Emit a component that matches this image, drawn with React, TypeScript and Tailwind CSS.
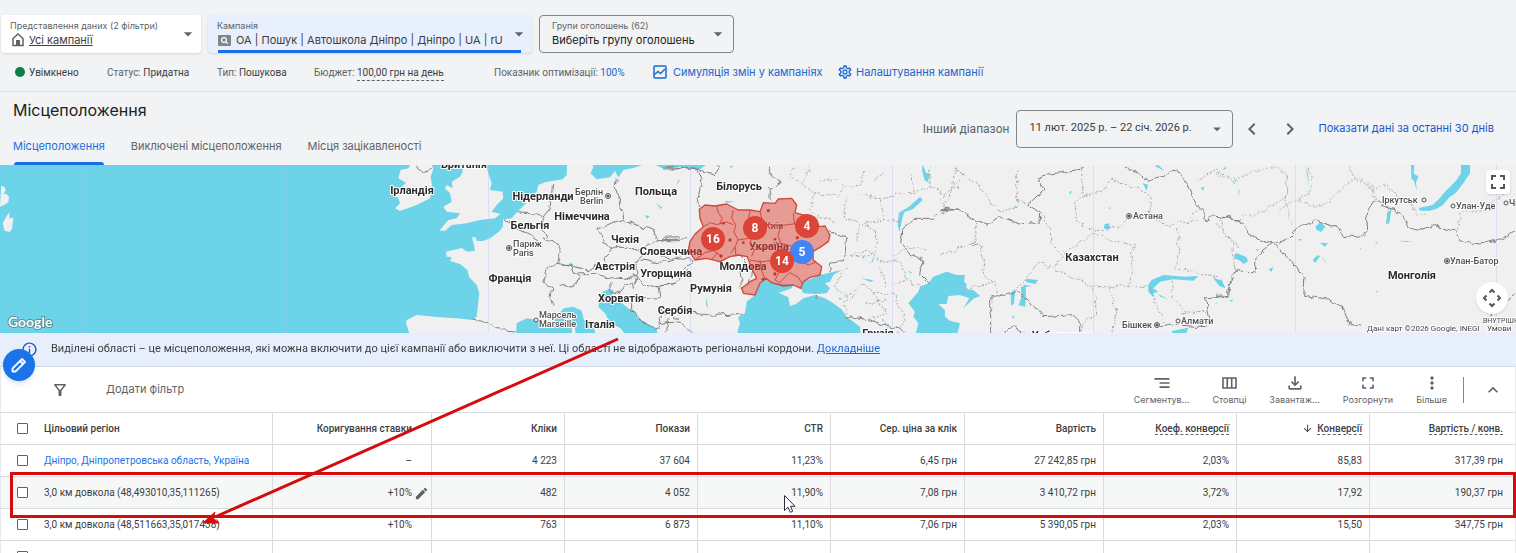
import { useState } from 'react';
import {
  MdArrowDownward,
  MdArrowDropDown,
  MdChevronLeft,
  MdChevronRight,
  MdEdit,
  MdFullscreen,
  MdInfoOutline,
  MdKeyboardArrowUp,
  MdMoreVert,
  MdOutlineFileDownload,
  MdOutlineFilterAlt,
  MdOutlineSettings,
  MdSegment,
} from 'react-icons/md';

const cls = {
  display: "font-['Inter',sans-serif]",
  muted: 'text-[#5f6368]',
  dashed: 'border-b border-dashed border-[#5f6368]',
  th: 'px-[7px] text-right font-medium text-[#3c4043]',
  cell: 'border-r border-[#dadce0] last:border-r-0',
};

const columns = [
  { label: 'Коригування ставки', width: 'w-[159px]' },
  { label: 'Кліки', width: 'w-[133px]' },
  { label: 'Покази', width: 'w-[133px]' },
  { label: 'CTR', width: 'w-[133px]' },
  { label: 'Сер. ціна за клік', width: 'w-[134px]' },
  { label: 'Вартість', width: 'w-[139px]' },
  { label: 'Коеф. конверсії', width: 'w-[133px]', dashed: true },
  { label: 'Конверсії', width: 'w-[133px]', dashed: true, sorted: true },
  { label: 'Вартість / конв.', width: 'w-[146px]', dashed: true },
];

const rows = [
  {
    region: 'Дніпро, Дніпропетровська область, Україна',
    link: true,
    values: ['–', '4 223', '37 604', '11,23%', '6,45 грн', '27 242,85 грн', '2,03%', '85,83', '317,39 грн'],
  },
  {
    region: '3,0 км довкола (48,493010,35,111265)',
    active: true,
    values: ['+10%', '482', '4 052', '11,90%', '7,08 грн', '3 410,72 грн', '3,72%', '17,92', '190,37 грн'],
  },
  {
    region: '3,0 км довкола (48,511663,35,017438)',
    values: ['+10%', '763', '6 873', '11,10%', '7,06 грн', '5 390,05 грн', '2,03%', '15,50', '347,75 грн'],
  },
  { region: '', values: ['', '', '', '', '', '', '', '', ''] },
];

const countries = [
  { text: 'Британія', x: 464, y: 168 },
  { text: 'Ірландія', x: 412, y: 194 },
  { text: 'Нідерланди', x: 543, y: 200 },
  { text: 'Німеччина', x: 582, y: 220 },
  { text: 'Бельгія', x: 530, y: 229 },
  { text: 'Польща', x: 656, y: 195 },
  { text: 'Чехія', x: 625, y: 243 },
  { text: 'Словаччина', x: 671, y: 255 },
  { text: 'Австрія', x: 615, y: 270 },
  { text: 'Угорщина', x: 666, y: 277 },
  { text: 'Франція', x: 510, y: 282 },
  { text: 'Хорватія', x: 621, y: 302 },
  { text: 'Сербія', x: 675, y: 314 },
  { text: 'Італія', x: 600, y: 328 },
  { text: 'Румунія', x: 711, y: 292 },
  { text: 'Молдова', x: 743, y: 270 },
  { text: 'Україна', x: 769, y: 250 },
  { text: 'Білорусь', x: 739, y: 190 },
  { text: 'Грузія', x: 878, y: 337 },
  { text: 'Казахстан', x: 1092, y: 261 },
  { text: 'Узбекистан', x: 1062, y: 339 },
  { text: 'Монголія', x: 1412, y: 279 },
];

const cities = [
  { text: 'Берлін', x: 575, y: 195, dot: [608, 196] },
  { text: 'Berlin', x: 580, y: 204 },
  { text: 'Париж', x: 513, y: 247, dot: [509, 248] },
  { text: 'Paris', x: 513, y: 256 },
  { text: 'Марсель', x: 539, y: 318, ring: [536, 320] },
  { text: 'Marseille', x: 539, y: 327 },
  { text: 'Київ', x: 765, y: 229 },
  { text: 'Астана', x: 1133, y: 219, dot: [1129, 216] },
  { text: 'Бішкек', x: 1122, y: 328, dot: [1157, 325] },
  { text: 'Алмати', x: 1181, y: 324, ring: [1178, 321] },
  { text: 'Іркутськ', x: 1382, y: 203, ring: [1424, 200] },
  { text: 'Улан-Уде', x: 1456, y: 209, ring: [1453, 206] },
  { text: 'Чита', x: 1509, y: 206, ring: [1506, 203] },
  { text: 'Улан-Батор', x: 1450, y: 264, dot: [1447, 261] },
];

const clusters = [
  { count: 8, x: 755, y: 228, color: '#db4437' },
  { count: 4, x: 807, y: 226, color: '#db4437' },
  { count: 16, x: 713, y: 239, color: '#db4437' },
  { count: 5, x: 802, y: 252, color: '#4285f4' },
  { count: 14, x: 782, y: 261, color: '#db4437' },
];

const HomeIcon = () => (
  <svg className="h-[14px] w-[12px] shrink-0" viewBox="0 0 12 14" fill="none" stroke="#5f6368" strokeWidth="1.5">
    <path d="M1 12.5V5.5L6 1l5 4.5v7z" />
    <path d="M4 12V7h4v5z" fill="#5f6368" stroke="none" />
  </svg>
);

const SearchBadge = () => (
  <svg className="h-[11px] w-[13px] shrink-0" viewBox="0 0 13 11" fill="none" stroke="#fff" strokeWidth="1.2">
    <rect width="13" height="11" rx="1" fill="#80868b" stroke="none" />
    <circle cx="6" cy="5" r="2.4" />
    <path d="M7.8 6.8l2 2" />
  </svg>
);

const ChartIcon = () => (
  <svg className="size-[14px] shrink-0" viewBox="0 0 14 14" fill="none" stroke="#1a67d2" strokeWidth="1.5">
    <rect x="1" y="1" width="12" height="12" rx="1" />
    <path d="M1.5 9.5l3.5-3 2.5 2 4.5-4.5" />
  </svg>
);

const ColumnsIcon = () => (
  <svg className="h-5 w-[15px]" viewBox="0 0 15 20" fill="none" stroke="currentColor" strokeWidth="1.6">
    <path d="M1 5h13v10H1zM5.3 5v10M9.7 5v10" />
  </svg>
);

const LocationMap = () => (
  <svg className="block h-full w-full" viewBox="0 165 1516 168" preserveAspectRatio="xMidYMid slice">
    <defs>
      <filter id="rough" x="0" y="165" width="1516" height="168" filterUnits="userSpaceOnUse">
        <feTurbulence type="fractalNoise" baseFrequency="0.12" numOctaves="2" seed="4" />
        <feDisplacementMap in="SourceGraphic" scale="7" xChannelSelector="R" yChannelSelector="G" />
      </filter>
    </defs>
    <rect y="165" width="1516" height="168" fill="#f0f0f0" />

    {/* Western Europe */}
    <g transform="translate(380 160) scale(.33333)">
      <path fill="#6cd3e8" d="M-1140 0H562L560 45L548 58L520 62L498 66L475 75L470 95L455 115L430 138L412 155L395 175L370 178L368 200L360 212L330 235L310 243L290 243L288 232L276 232L282 255L285 272L262 275L245 264L198 275L200 290L215 292L210 303L240 312L262 330L268 352L290 375L298 400L290 470L278 480L230 475L180 472L110 465L80 480L78 490L92 530H-1140z" />
      <path fill="#6cd3e8" d="M408 530L410 490L440 475L470 480L520 492L532 465L552 445L580 440L605 452L612 480L640 500L650 530z" />
      <path fill="#6cd3e8" d="M655 440L660 412L668 395L690 387L702 392L695 408L720 425L745 445L765 455L775 475L800 490L830 505L834 530H740L722 505L690 488L675 460z" />
      <path fill="#6cd3e8" d="M632 0L640 22L632 40L650 58L690 52L705 32L715 52L730 30L760 24L792 13H822L850 26L880 22L900 22L960 28L980 13L980 0z" />
      <path fill="#6cd3e8" d="M566 308l14 4-4 7zM706 232l14 6-8 3zM826 128l22 16-6 2zM795 165l14 4-8 8z" />
      <path fill="#f0f0f0" d="M245 0L248 35L240 50L215 65L218 85L200 75L195 85L210 100L215 125L190 140L200 155L240 160L230 175L205 180L178 212L195 212L215 195L260 190L300 180L345 175L362 162L335 155L350 135L370 115L368 95L330 90L335 70L325 40L315 0z" />
      <path fill="#f0f0f0" d="M100 0L85 25L62 30L55 55L78 68L65 80L35 100L55 115L60 130L45 145L60 153L110 135L150 115L157 80L152 50L160 28L150 0z" />
      <path fill="#f0f0f0" d="M425 122l30-6-15 14zM575 498l8-6 4 30h-10zM-1137 90v-12l10 2l4 10l-6 12l8 0l8 8l-2 16l-12 8l-13 6zM-1132 190l12-22l8 -12v20l12-4l-4 36l-8 8l-14-4z" />
    </g>

    {/* Black Sea and Azov */}
    <g transform="translate(660 160) scale(.33333)" fill="#6cd3e8">
      <path d="M318 356L335 368L400 375L395 385L375 392L356 398L385 412L390 438L408 432L430 415L465 405L495 415L520 430L545 448L560 470L600 500L602 530H228L240 490L234 472L255 460L260 425L285 405L298 375z" />
      <path d="M430 365L480 345L545 330L520 345L510 365L495 370L510 385L500 400L465 402L430 400L422 385z" />
      <path d="M788 13l10 25 15 5-10 18 5 8-14-8-8-30zM780 110l8 10-30 28-25 8-8 25-6 35-6-20 4-38 30-18zM645 280l-6 25-25 12 20-10zM606 290l10-5-6 12zM605 355l35 6-8 5zM745 330l12 10-8-2zM535 412l12 4-8 4zM140 412l4 35-6-15zM0 15h20l-12 10zM60 60l-12 18 8-18zM196 122l30 4-28 2zM210 18l8 0-4 8z" />
    </g>

    {/* Caspian Sea, Aral Sea and Balkhash */}
    <g transform="translate(940 160) scale(.33333)" fill="#6cd3e8">
      <path d="M-95 430L-65 395L-60 380L-35 370L-20 350L20 335L50 345L75 345L72 365L80 372L78 388L100 390L120 408L100 416L70 445L88 415L60 405L25 408L20 432L-5 432L15 450L15 470L30 482L60 490L50 530H-75L-65 490L-80 470L-75 455z" />
      <path d="M625 375L635 360L670 345L735 350L775 348L760 362L700 358L660 365L640 385L655 395L640 400L640 412L625 395zM655 402l30 16-24-8zM720 460l24-2-14 6zM818 352l20 8 18 24-18-6zM695 513l50-10-10 27h-35zM212 400l14-14-4 45-9 6zM243 380l14 0 1 30-2 30-20-4 8-26zM258 356l36 4-8 12-28-6zM250 374l26 4-26 4zM215 470l8-4-3 10zM388 96l8-4-6 14zM494 192l14-2 0 18-16-2zM505 142l8 2-6 3zM608 70l16 4-4 18zM655 15l-12 2 30 16zM695 50l4 8-2-6zM782 84l10-4-2 12zM845 30l15-12-4 10zM885 280l15 10v8l-16 0zM786 194l18 4zM555 162l10 6zM825 430l6-3-2 6zM870 420l10 0-6 5zM505 188l8 4zM222 138l12 4-10 3z" />
    </g>

    {/* Baikal and the lakes of Mongolia */}
    <g transform="translate(1216 160) scale(.33333)" fill="#6cd3e8">
      <path d="M735 0L762 0L762 40L745 65L720 98L700 112L680 136L660 147L640 152L612 152L608 144L650 135L668 118L690 92L720 62L735 40z" />
      <path d="M585 15l10 0-2 25 15 10-8 16 2 25-8-28-8-8zM268 15l8 30 4 35-8-40zM298 200l16-14 14 14-12 16-14-6zM514 155l12-6-6 40-10 4zM52 288l12-8 28 12 4 12-12 8zM312 248l24 2-10 10zM290 300l14-14 8 2-14 20zM320 290l14 24-12-16zM335 286l18 22zM370 314l26 6zM545 242l45 2-20 2zM478 246l8 2-6 4zM158 328l14-6-6 14zM6 362l10-4 12 26-18-6zM40 420l12 0-6 5zM248 236l10 2-6 6zM118 268l12 0-6 4zM68 88v22l3-18zM80 116l26-4zM52 50l16 18-12-8zM20 25l18-12zM184 12l6 4zM328 70l28-2zM430 265l6 0-3 4zM372 202l8 14-8-6zM395 228l22-2zM480 392l6 2-4 4z" />
    </g>

    {/* State borders */}
    <g fill="none" stroke="#808080" filter="url(#rough)">
      <g transform="translate(380 160) scale(.33333)" strokeWidth="3">
        <path d="M278 480l50 12 40 20 38 4M412 155l50 4 28 12-2 32 12 30M370 178l30 22 50 24 30 20M490 235l55 22-12 52-25 10-20 50 28 10-6 30 12 30M518 75l-8 70-20 30M708 55l-2 30 14 38 8 52M728 178l-74 26 14 36 26 30M728 178l50 20 44 12 12 32-48 20-10 20M694 270l20-14 60 14 12 18M694 270l-24 22 6 26-30 0-22 12-60-14-16 0M534 310l40 10 12 22 22 10-24 20-22 4-26-4M586 342l60-2 34 12M680 352l50 4 38-14-4-24 20-30M834 242l66 0M785 300l60 10 60-20M768 342l22 30 30 10 70-14M690 370l0 20 26 8 20-24 28-4 2-22M768 345l-8 44M755 412l85 2M755 412l0 36 34 40 36 22 20-26-4-34M840 414l-6-34M840 450l60 30M850 24l100 0M110 20l20 18 25 -10" />
        <path d="M834 242l20-10 46-2M870 480l-20 40" />
      </g>
      <g transform="translate(660 160) scale(.33333)" strokeWidth="3">
        <path d="M20 20l92 6 14 30-12 60 6 24M112 26l50 18 14-30M325 20l8 30 28 20-30 16-2 40M0 240l85-4M0 290l90 10 12 0M60 340l44-40M0 378l50-8 34-40M170 305l70 14 4 66M240 285l40 40-16 46M100 460l60 6 90-6M0 450l40 10 60 0M0 490l60-4 40 34M510 215l50 20-4 40-4 30-40 4-2 24M465 405l4 12M560 470l60 8 60 20 60 14M900 145l-48 4-30 26-60 0-34 36-6 38 24 30 46 22-10 40 26 26" />
      </g>
      <g transform="translate(940 160) scale(.33333)" strokeWidth="3">
        <path d="M0 150l30-6 34 10 46 28 34 10 34-22 62 22 60-6 2-26-38-26 48-46-20-30 30-14 110-18M556 20l40 20 28 24 50-16 34-20 36 46 54 108 20-14 82 10M152 530V415L225 394L262 420L312 470L400 464L422 496V530M662 496l60 0 70 4 18-20-14-66 70-10 8-60 20-12M190 516l30-14 30 14" />
      </g>
      <g transform="translate(1216 160) scale(.33333)" strokeWidth="3">
        <path d="M0 172l70 4 30 50 64 26 50-12 36-38 50-20 60 20 20 24 55 6 20-20-4-50 22-36 84 32 18 42 30 10 50-16 60 16 20 36 60 6 60-16 50-26M164 252l-44 40-2 44-60-4-26 72-32 2M176 252l54 58 34 40-4 56 70 10 52 28 20 50 40 4M800 490l100-90" />
      </g>
    </g>

    {/* Regional borders */}
    <g fill="none" stroke="#a8a8a8" filter="url(#rough)">
      <g transform="translate(660 160) scale(.33333)" strokeWidth="3" strokeDasharray="6 5">
        <path d="M400 20l-12 34 44 16 16-50M432 70l30 30-12 50 30 20M462 100l70 10 20-30 50-4 10-50M480 60l50 0 24 20M560 110l-10 60 50 20-10 54M600 100l60 20 14 60-64 10M660 120l50-20 50 0-8-60M640 60l30-20M674 180l50 6M760 100l50-20 40 20 50-20M810 80l0-60M610 190l40 30 0 60-60 10M560 290l60-20 40 30 60 0 20 60-60 20-20-60M560 320l-40 60 40 30 50-40 30 30 40 60-60 20M590 400l-40 30 20 60M640 400l60 0 34 80-20 40M740 360l40 20M700 300l40-40 60 10M520 180l-60-10M900 60l-60 60 24 30M670 480l14 30M620 430l60-10" />
      </g>
      <g transform="translate(940 160) scale(.33333)" strokeWidth="3" strokeDasharray="6 5">
        <path d="M50 20l-10 60-26 60M50 30l60 40 60 80 60-6 0-120M230 115l30 16M110 190l-6 60-50 16-54 18M94 252l30 4 10 90 30 20 6 40M80 385l84-20M304 160l28 50 0 40 36 40-26 36-44-20-74 90M342 330l100 40 30 10h158M460 220l-90 60M460 220l80 30 40 0-10 128M424 20l6 90-26 14 6 60 50 30 80-14 30-30 56-12 50 40 40-14 60 0M430 110l60-20 20-30 80 24 40 24 0 54M770 60l60-30 60 40M780 150l-30 20 20 20M710 210l10 60-14 56 70 14 60 10M840 180l10 40 50 40M460 380l10 80-48 40M508 380l20 70-10 70M630 380l20 60 30 54M696 365l0 50 40 40 70 4" />
      </g>
      <g transform="translate(1216 160) scale(.33333)" strokeWidth="3" strokeDasharray="6 5">
        <path d="M0 40l50 24 60-30 70-14 34 30-4 60-60 40-70 20M214 50l-4 90 20 60M280 20l6 70-40 30-60 30M250 120l60 24 40-30 60-56 60 20 10 50M470 90l40-16 50 50 30 10 10 30 30-4M400 20l10 30 30 10M724 210l10-50 70-10 80-60M0 190l50 60 6 80" />
      </g>
    </g>
    <path
      d="M84.500 165v168M286.500 165v168M488.500 165v168M690.500 165v168M892.500 165v168M1093.500 165v168M1295.500 165v168M1496.500 165v168"
      stroke="#a9c4f0"
      strokeOpacity=".35"
    />

    {/* Labels */}
    <g
      fontFamily="Roboto, sans-serif"
      stroke="#fff"
      strokeWidth="2"
      strokeLinejoin="round"
      paintOrder="stroke"
    >
      <g fontSize="11" fontWeight="700" textAnchor="middle" fill="#2b2b2b">
        {countries.map((c) => (
          <text key={c.text} x={c.x} y={c.y}>
            {c.text}
          </text>
        ))}
      </g>
      <g fontSize="9" fontWeight="500" fill="#4d4d4d">
        {cities.map((c) => (
          <text key={c.text} x={c.x} y={c.y}>
            {c.text}
          </text>
        ))}
      </g>
      <g fontSize="8" fill="#444">
        <text x="1367" y="331">Дані карт ©2026 Google, INEGI</text>
        <text x="1487" y="331">Умови</text>
        <text x="1483" y="323" fontSize="7">ВНУТРІШНЯ</text>
      </g>
    </g>
    {cities.map((c) => (
      <g key={c.text} fill="#f0f0f0" stroke="#555">
        {c.dot && (
          <>
            <circle cx={c.dot[0]} cy={c.dot[1]} r="2.500" />
            <circle cx={c.dot[0]} cy={c.dot[1]} r="1" fill="#333" />
          </>
        )}
        {c.ring && <circle cx={c.ring[0]} cy={c.ring[1]} r="2" />}
      </g>
    ))}

    {/* Oblasts of Ukraine that the campaign targets */}
    <g transform="translate(660 160) scale(.33333)" stroke="#d4473c" strokeWidth="4" strokeLinejoin="round">
      <path fill="#de463a" fillOpacity=".5" d="M118 148L135 135L165 138L200 132L235 150L270 150L300 155L310 128L345 130L355 117L395 115L410 135L405 158L440 168L480 200L495 198L510 225L505 245L480 262L458 275L460 300L485 320L480 345L450 352L430 365L422 385L400 375L370 378L335 368L318 355L300 370L285 405L250 400L245 385L270 365L290 355L275 325L262 290L235 285L210 290L180 305L140 295L105 300L85 270L90 245L105 222L130 200L120 175z" />
      <path fill="none" strokeWidth="3" d="M170 138l5 20 12 18-8 16M130 200l22-12 18 6 30-8 20 8M220 150l-5 24 12 20-5 22 12 22-8 22-14 20M270 152l-4 22 10 18M300 155l6 24 16 14-6 22M322 193l40 4 44-6M362 197l-8 30 8 22M275 225l-4 30 12 14-8 20M234 240l36-6M228 290l-2-28M283 269l30-6 48-14 48 14M105 300l30-22 25-6 20 14M155 298l20-22M270 300l32 6 28-4 36-10M300 300l4 30 10 24M366 250l-2 30M365 325l-20 35 14 8 30-30 26 14 12 20M400 160l4 34M425 305l20 10 22-8M458 275l-30-8" />
      <g fill="#c5372c" stroke="none">
        <circle cx="325" cy="152" r="5" />
        <circle cx="412" cy="233" r="5" />
        <circle cx="210" cy="240" r="5" />
        <circle cx="250" cy="248" r="4" />
        <circle cx="183" cy="288" r="5" />
        <circle cx="345" cy="342" r="5" />
        <circle cx="345" cy="238" r="4" />
        <circle cx="190" cy="190" r="4" />
        <circle cx="310" cy="358" r="5" />
      </g>
    </g>

    {clusters.map((c) => (
      <g key={c.count}>
        <circle cx={c.x} cy={c.y} r="12" fill={c.color} />
        <text
          x={c.x}
          y={c.y + 4}
          textAnchor="middle"
          fontFamily="Roboto, sans-serif"
          fontSize="12"
          fontWeight="700"
          fill="#fff"
        >
          {c.count}
        </text>
      </g>
    ))}
    <text
      x="8"
      y="327"
      fontFamily="Lato, sans-serif"
      fontSize="14"
      fontWeight="700"
      fill="#fff"
      stroke="#5b8f9b"
      strokeWidth="2"
      paintOrder="stroke"
    >
      Google
    </text>
  </svg>
);

const ScopeBar = () => (
  <div className={`flex gap-[7px] pt-[15px] pl-px ${cls.display}`}>
    <button className="flex h-[38px] w-[200px] items-center justify-between rounded-sm bg-white pr-[3px] pl-[9px] text-left shadow">
      <span>
        <span className={`block text-[9px] leading-3 ${cls.muted}`}>Представлення даних (2 фільтри)</span>
        <span className="flex items-center gap-[5px] pl-[2px] text-[11px] leading-4 text-[#3c4043]">
          <HomeIcon />
          <span className="underline">Усі кампанії</span>
        </span>
      </span>
      <MdArrowDropDown size={20} className={cls.muted} />
    </button>
    <button className="relative flex h-[38px] w-[324px] items-center justify-between rounded-sm bg-[#e8effd] pr-[3px] pl-[9px] text-left shadow">
      <span>
        <span className={`block text-[9px] leading-3 ${cls.muted}`}>Кампанія</span>
        <span className="flex items-center gap-[5px] pl-px text-[11px] leading-4 text-[#3c4043]">
          <SearchBadge />
          ОА | Пошук | Автошкола Дніпро | Дніпро | UA | rU
        </span>
      </span>
      <MdArrowDropDown size={20} className={cls.muted} />
      <span className="absolute right-[11px] bottom-0 left-[10px] h-[3px] bg-[#1a6ee5]" />
    </button>
    <button className="flex h-[38px] w-[195px] items-center justify-between rounded-sm border border-[#80868b] pr-[5px] pl-3 text-left">
      <span>
        <span className={`block text-[9px] leading-3 ${cls.muted}`}>Групи оголошень (62)</span>
        <span className="block text-[11px] leading-4 text-[#202124]">Виберіть групу оголошень</span>
      </span>
      <MdArrowDropDown size={20} className={cls.muted} />
    </button>
  </div>
);

const StatusBar = () => (
  <div className={`flex h-[39px] items-center border-b border-[#dadce0] pl-[15px] text-[10px] ${cls.muted}`}>
    <span className="flex w-[92px] items-center gap-1 text-[#3c4043]">
      <span className="size-[10px] rounded-full bg-[#0b8043]" />
      Увімкнено
    </span>
    <span className="w-[110px]">
      Статус: <span className="text-[#3c4043]">Придатна</span>
    </span>
    <span className="w-[97px]">
      Тип: <span className="text-[#3c4043]">Пошукова</span>
    </span>
    <span className="w-[180px]">
      Бюджет: <span className={`pb-[2px] text-[#3c4043] ${cls.dashed}`}>100,00 грн на день</span>
    </span>
    <span className="w-[159px]">
      Показник оптимізації: <span className="text-[#1a67d2]">100%</span>
    </span>
    <a href="#simulation" className={`flex w-[184px] items-center gap-[6px] text-[11px] text-[#1a67d2] ${cls.display}`}>
      <ChartIcon />
      Симуляція змін у кампаніях
    </a>
    <a href="#settings" className={`flex items-center gap-[3px] text-[11px] text-[#1a67d2] ${cls.display}`}>
      <MdOutlineSettings size={16} />
      Налаштування кампанії
    </a>
  </div>
);

const PageHeader = () => (
  <div className="flex h-[73px] justify-between">
    <div className={`flex flex-col justify-between pl-[13px] ${cls.display}`}>
      <h1 className="pt-[6px] text-[16px] leading-6 text-[#202124]">Місцеположення</h1>
      <nav className={`flex gap-[26px] text-[11px] ${cls.muted}`}>
        <a href="#locations" className="relative h-[27px] text-[#1a6ee5]">
          Місцеположення
          <span className="absolute inset-x-[1px] bottom-0 h-[3px] rounded-t bg-[#1a6ee5]" />
        </a>
        <a href="#excluded">Виключені місцеположення</a>
        <a href="#interest">Місця зацікавленості</a>
      </nav>
    </div>
    <div className="flex h-[73px] items-center pr-[22px] text-[11px]">
      <span className={`text-[12px] ${cls.muted}`}>Інший діапазон</span>
      <button className="ml-[7px] flex h-[38px] w-[217px] items-center justify-between rounded-sm border border-[#80868b] pr-[6px] pl-3 text-[#3c4043]">
        11 лют. 2025 р. – 22 січ. 2026 р.
        <MdArrowDropDown size={18} className={cls.muted} />
      </button>
      <button aria-label="Попередній період" className={`ml-[7px] ${cls.muted}`}>
        <MdChevronLeft size={24} />
      </button>
      <button aria-label="Наступний період" className={`ml-[14px] ${cls.muted}`}>
        <MdChevronRight size={24} />
      </button>
      <a href="#last30" className={`ml-4 text-[#1a56d2] ${cls.display}`}>
        Показати дані за останні 30 днів
      </a>
    </div>
  </div>
);

const Toolbar = () => (
  <div className={`flex h-[45px] items-center justify-between border-x border-[#e8eaed] bg-white ${cls.muted} ${cls.display}`}>
    <div className="flex items-center gap-[37px] pl-[50px] text-[11px]">
      <MdOutlineFilterAlt size={18} />
      <button>Додати фільтр</button>
    </div>
    <div className="flex items-center pr-[12px] text-[9px]">
      <div className="flex gap-[23px]">
        <button className="flex flex-col items-center">
          <MdSegment size={20} />
          Сегментув...
        </button>
        <button className="flex flex-col items-center">
          <ColumnsIcon />
          Стовпці
        </button>
        <button className="flex flex-col items-center">
          <MdOutlineFileDownload size={20} />
          Завантаж...
        </button>
        <button className="flex flex-col items-center">
          <MdFullscreen size={20} />
          Розгорнути
        </button>
        <button className="flex flex-col items-center">
          <MdMoreVert size={20} />
          Більше
        </button>
      </div>
      <span className="mr-[19px] ml-4 h-[26px] w-px bg-[#80868b]" />
      <button aria-label="Згорнути">
        <MdKeyboardArrowUp size={20} />
      </button>
    </div>
  </div>
);

const Checkbox = ({ label, checked, onChange }: { label: string; checked: boolean; onChange: () => void }) => (
  <input
    type="checkbox"
    aria-label={label}
    checked={checked}
    onChange={onChange}
    className="block size-[11px] shrink-0 appearance-none rounded-[1px] border border-[#5f6368] bg-white checked:bg-[#1a6ee5]"
  />
);

const LocationsTable = () => {
  const [selected, setSelected] = useState<number[]>([]);

  const toggle = (i: number) =>
    setSelected(selected.includes(i) ? selected.filter((s) => s !== i) : [...selected, i]);

  const allSelected = selected.length === rows.length;

  return (
    <table className="w-full table-fixed border-collapse border-x border-[#e8eaed] bg-white text-[10px] text-[#3c4043]">
      <colgroup>
        <col className="w-[272px]" />
        {columns.map((col) => (
          <col key={col.label} className={col.width} />
        ))}
      </colgroup>
      <thead>
        <tr className="h-8 border-y border-[#dadce0]">
          <th className={`pl-4 text-left font-medium ${cls.cell}`}>
            <span className="flex items-center gap-4">
              <Checkbox
                label="Вибрати всі"
                checked={allSelected}
                onChange={() => setSelected(allSelected ? [] : rows.map((_, i) => i))}
              />
              Цільовий регіон
            </span>
          </th>
          {columns.map((col, i) => (
            <th
              key={col.label}
              className={`${cls.th} ${cls.cell} ${i === 0 ? 'pr-[19px]' : ''} ${i === 8 ? 'pr-3' : ''}`}
            >
              {col.sorted && <MdArrowDownward size={11} className="mr-1 inline align-[-2px]" />}
              <span className={col.dashed ? cls.dashed : ''}>{col.label}</span>
            </th>
          ))}
        </tr>
      </thead>
      <tbody>
        {rows.map((row, i) => (
          <tr key={i} className={`h-8 border-b border-[#dadce0] ${row.active ? 'bg-[#f6f8f8]' : ''}`}>
            <td className={`pl-4 ${cls.cell}`}>
              <span className="flex items-center gap-4 whitespace-nowrap">
                <Checkbox
                  label={row.region || 'Вибрати рядок'}
                  checked={selected.includes(i)}
                  onChange={() => toggle(i)}
                />
                {row.link ? (
                  <a href="#dnipro" className="text-[#1a73e8]">
                    {row.region}
                  </a>
                ) : (
                  row.region
                )}
              </span>
            </td>
            {row.values.map((value, j) => (
              <td
                key={j}
                className={`relative px-[7px] text-right ${cls.cell} ${j === 0 ? 'pr-[19px]' : ''} ${j === 8 ? 'pr-3' : ''}`}
              >
                {value}
                {row.active && j === 0 && (
                  <button aria-label="Змінити ставку" className={`absolute top-[9px] right-[2px] ${cls.muted}`}>
                    <MdEdit size={15} />
                  </button>
                )}
              </td>
            ))}
          </tr>
        ))}
      </tbody>
    </table>
  );
};

const Annotations = () => (
  <div className="pointer-events-none absolute inset-0">
    <div className="absolute top-[472px] right-0 left-[10px] h-[46px] border-3 border-[#d60c0c]" />
    <svg className="absolute top-[330px] left-[190px] h-[200px] w-[440px]" viewBox="190 330 440 200">
      <path d="M618 339L215 517" stroke="#d60c0c" strokeWidth="3" />
      <path d="M203 523L215 512L213 518L219 523z" fill="#d60c0c" stroke="#d60c0c" />
    </svg>
    <svg className="absolute top-[494px] left-[783px] h-5 w-[14px]" viewBox="0 0 14 20">
      <path d="M1.500 1.500v15l3.500-3.200 2.300 5 2.400-1-2.200-5h4.500z" fill="#fff" stroke="#2b2b40" />
    </svg>
  </div>
);

export default function App() {
  return (
    <div className="relative h-screen overflow-hidden bg-[#f1f3f4] font-['Roboto',sans-serif]">
      <ScopeBar />
      <StatusBar />
      <PageHeader />
      <div className="relative h-[168px] overflow-hidden">
        <LocationMap />
        <button
          aria-label="На весь екран"
          className="absolute top-[5px] right-[6px] flex size-6 items-center justify-center rounded bg-white text-[#555] shadow"
        >
          <MdFullscreen size={24} />
        </button>
        <button
          aria-label="Елементи керування картою"
          className="absolute right-2 bottom-[19px] flex size-8 items-center justify-center rounded-full bg-white shadow"
        >
          <svg className="size-5" viewBox="0 0 20 20" fill="none" stroke="#555" strokeWidth="2">
            <path d="M7.500 4.500L10 2l2.500 2.500M7.500 15.500L10 18l2.500-2.500M4.500 7.500L2 10l2.500 2.500M15.500 7.500L18 10l-2.500 2.500" />
          </svg>
        </button>
      </div>
      <div className="relative flex h-[34px] items-center gap-[13px] border-b border-[#d3dbea] bg-[#e8effc] pl-[21px] text-[11px] text-[#3c4043]">
        <MdInfoOutline size={17} className="shrink-0 text-[#1a56d2]" />
        <p>
          Виділені області – це місцеположення, які можна включити до цієї кампанії або виключити з неї. Ці області не
          відображають регіональні кордони.{' '}
          <a href="#more" className="text-[#1a67d2] underline">
            Докладніше
          </a>
        </p>
        <button
          aria-label="Редагувати"
          className="absolute top-4 left-[3px] z-10 flex size-8 items-center justify-center rounded-full bg-[#1a73e8] text-white shadow-md"
        >
          <svg className="size-[18px]" viewBox="0 0 18 18" fill="none" stroke="currentColor" strokeWidth="1.800" strokeLinejoin="round">
            <path d="M2.500 15.500v-3l9.500-9.500 3 3-9.500 9.500zM10 5l3 3" />
          </svg>
        </button>
      </div>
      <Toolbar />
      <LocationsTable />
      <Annotations />
    </div>
  );
}
